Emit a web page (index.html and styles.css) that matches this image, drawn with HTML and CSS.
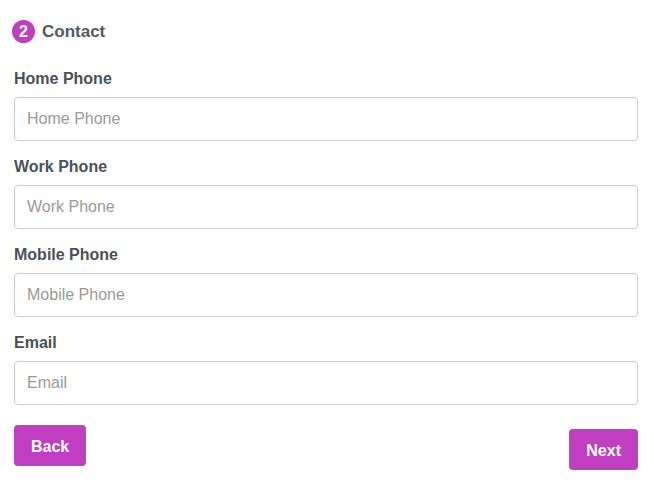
FILE: index.html
```html
<!DOCTYPE html>
<html lang="en">
<head>
<meta charset="utf-8">
<title>Contact</title>
<link rel="stylesheet" href="styles.css">
</head>
<body>
<div class="form">
  <h2 class="step-title"><span class="badge">2</span><span>Contact</span></h2>
  <div class="field">
    <label class="label" for="home">Home Phone</label>
    <input class="input" id="home" type="text" placeholder="Home Phone">
  </div>
  <div class="field">
    <label class="label" for="work">Work Phone</label>
    <input class="input" id="work" type="text" placeholder="Work Phone">
  </div>
  <div class="field">
    <label class="label" for="mobile">Mobile Phone</label>
    <input class="input" id="mobile" type="text" placeholder="Mobile Phone">
  </div>
  <div class="field">
    <label class="label" for="email">Email</label>
    <input class="input" id="email" type="text" placeholder="Email">
  </div>
  <div class="actions">
    <button class="btn" type="button">Back</button>
    <button class="btn btn-next" type="button">Next</button>
  </div>
</div>
</body>
</html>
```
FILE: styles.css
```css
html, body {
  margin: 0;
  padding: 0;
  background: #ffffff;
}
body {
  font-family: "Liberation Sans", Arial, sans-serif;
  color: #4b5157;
}
.form {
  padding: 20px 16px 0 14px;
}
.step-title {
  display: flex;
  align-items: center;
  gap: 7px;
  margin: 0 0 26px -2px;
  font-size: 17px;
  font-weight: bold;
  line-height: 23px;
  color: #545b62;
}
.badge {
  width: 23px;
  height: 23px;
  border-radius: 50%;
  background: #c03fc0;
  color: #ffffff;
  font-size: 16px;
  line-height: 23px;
  text-align: center;
  font-weight: bold;
}
.field {
  margin-bottom: 16px;
}
.label {
  display: block;
  font-size: 16px;
  font-weight: bold;
  line-height: 20px;
  margin-bottom: 8px;
  color: #4b5157;
}
.input {
  display: block;
  box-sizing: border-box;
  width: 100%;
  height: 44px;
  margin: 0;
  padding: 0 12px;
  border: 1px solid #cccccc;
  border-radius: 4px;
  font-family: "Liberation Sans", Arial, sans-serif;
  font-size: 16px;
  color: #333;
  background: #fff;
  outline: none;
}
.input::placeholder {
  color: #9a9a9a;
}
.actions {
  display: flex;
  justify-content: space-between;
  align-items: flex-start;
  padding-top: 4px;
}
.btn {
  height: 41px;
  padding: 2px 17px 0;
  border: none;
  border-radius: 4px;
  background: #c03fc0;
  color: #ffffff;
  font-family: "Liberation Sans", Arial, sans-serif;
  font-size: 16px;
  font-weight: bold;
  cursor: pointer;
}
.btn-next {
  margin-top: 4px;
}
```
